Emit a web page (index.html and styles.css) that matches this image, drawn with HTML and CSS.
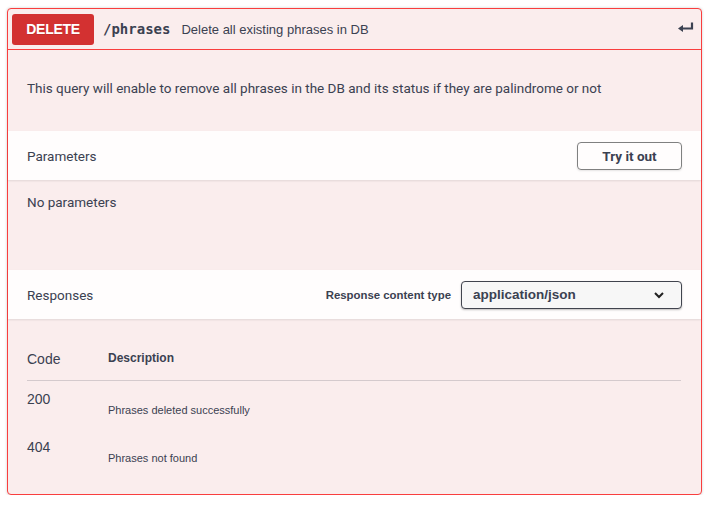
FILE: index.html
```html
<!DOCTYPE html>
<html>
<head>
<meta charset="utf-8">
<link rel="stylesheet" href="styles.css">
</head>
<body>
<div class="opblock">
  <div class="summary">
    <span class="method">DELETE</span>
    <span class="path">/phrases</span>
    <span class="summary-desc">Delete all existing phrases in DB</span>
    <svg class="arrow" width="16" height="12" viewBox="0 0 16 12">
      <path d="M14 0.5 V6.5 H4" fill="none" stroke="#3b4151" stroke-width="2.2"/>
      <path d="M0 6.5 L5 3 V10 Z" fill="#3b4151"/>
    </svg>
  </div>
  <div class="description">This query will enable to remove all phrases in the DB and its status if they are palindrome or not</div>
  <div class="section-header">
    <span class="section-title">Parameters</span>
    <button class="try-btn">Try it out</button>
  </div>
  <div class="params-body">No parameters</div>
  <div class="section-header">
    <span class="section-title">Responses</span>
    <div class="content-type">
      <span class="ct-label">Response content type</span>
      <div class="select">
        <span>application/json</span>
        <svg width="12" height="8" viewBox="0 0 12 8"><path d="M2 2 L6 6 L10 2" fill="none" stroke="#222" stroke-width="2"/></svg>
      </div>
    </div>
  </div>
  <div class="responses">
    <div class="resp-head">
      <span class="col-code">Code</span>
      <span class="col-desc-h">Description</span>
    </div>
    <div class="resp-row">
      <span class="code">200</span>
      <span class="rdesc">Phrases deleted successfully</span>
    </div>
    <div class="resp-row">
      <span class="code">404</span>
      <span class="rdesc">Phrases not found</span>
    </div>
  </div>
</div>
</body>
</html>
```

FILE: styles.css
```css
* { box-sizing: border-box; }
body {
  margin: 0;
  padding: 8px 0 0 7px;
  background: #fff;
  color: #3b4151;
  font-family: Roboto, "Liberation Sans", sans-serif;
}
.opblock {
  width: 695px;
  height: 487px;
  border: 1px solid #f93e3e;
  border-radius: 4px;
  background: #faeded;
  box-shadow: 0 0 3px rgba(0, 0, 0, 0.19);
}
.summary {
  display: flex;
  align-items: center;
  height: 41px;
  padding: 0 7px 0 4px;
  border-bottom: 1px solid #f93e3e;
}
.method {
  width: 82px;
  height: 31px;
  background: #d33131;
  color: #fff;
  border-radius: 3px;
  font-family: "Liberation Sans", Arial, sans-serif;
  font-size: 14px;
  font-weight: 700;
  letter-spacing: -0.3px;
  display: flex;
  align-items: center;
  justify-content: center;
  text-shadow: 0 1px 0 rgba(0, 0, 0, 0.1);
}
.path {
  margin-left: 9px;
  font-family: "DejaVu Sans Mono", monospace;
  font-weight: 700;
  font-size: 14px;
  color: #3b4151;
}
.summary-desc {
  margin-left: 11px;
  font-family: "Liberation Sans", Arial, sans-serif;
  font-size: 13px;
  color: #3b4151;
  flex: 1;
}
.arrow { margin-top: -2px; }
.description {
  padding: 28px 19px 33px;
  line-height: 20px;
  font-size: 13.5px;
  height: 81px;
}
.section-header {
  display: flex;
  align-items: center;
  justify-content: space-between;
  height: 49px;
  padding: 0 19px;
  background: rgba(255, 255, 255, 0.85);
  box-shadow: 0 1px 2px rgba(0, 0, 0, 0.1);
}
.section-title { font-size: 13.5px; }
.try-btn {
  width: 105px;
  height: 28px;
  border: 1px solid #808080;
  border-radius: 4px;
  background: transparent;
  box-shadow: 0 1px 2px rgba(0, 0, 0, 0.1);
  font-family: Roboto, sans-serif;
  font-size: 13.5px;
  font-weight: 700;
  color: #3b4151;
  margin-top: 1px;
}
.params-body {
  height: 90px;
  padding: 12px 19px 0;
  line-height: 20px;
  font-size: 13.5px;
}
.content-type {
  display: flex;
  align-items: center;
  gap: 10px;
}
.ct-label {
  font-family: "Liberation Sans", Arial, sans-serif;
  font-size: 11.4px;
  font-weight: 700;
}
.select {
  width: 221px;
  height: 28px;
  border: 1px solid #41444e;
  border-radius: 4px;
  background: #f7f7f7;
  box-shadow: 0 1px 2px rgba(0, 0, 0, 0.25);
  display: flex;
  align-items: center;
  justify-content: space-between;
  padding: 0 16px 0 11px;
  font-family: "Liberation Sans", Arial, sans-serif;
  font-size: 13.5px;
  font-weight: 700;
}
.responses { padding: 30px 20px 0 19px; }
.resp-head {
  display: flex;
  align-items: flex-start;
  height: 32px;
  line-height: 20px;
  border-bottom: 1px solid rgba(59, 65, 81, 0.2);
}
.col-code {
  width: 81px;
  font-family: "Liberation Sans", Arial, sans-serif;
  font-size: 14px;
}
.col-desc-h {
  font-family: "Liberation Sans", Arial, sans-serif;
  font-size: 12px;
  font-weight: 700;
  margin-top: -1px;
}
.resp-row {
  display: flex;
  height: 48px;
  padding-top: 10px;
}
.code {
  width: 81px;
  font-family: "Liberation Sans", Arial, sans-serif;
  font-size: 14px;
  line-height: 16px;
}
.rdesc {
  font-family: "Liberation Sans", Arial, sans-serif;
  font-size: 11px;
  margin-top: 13px;
}
```
